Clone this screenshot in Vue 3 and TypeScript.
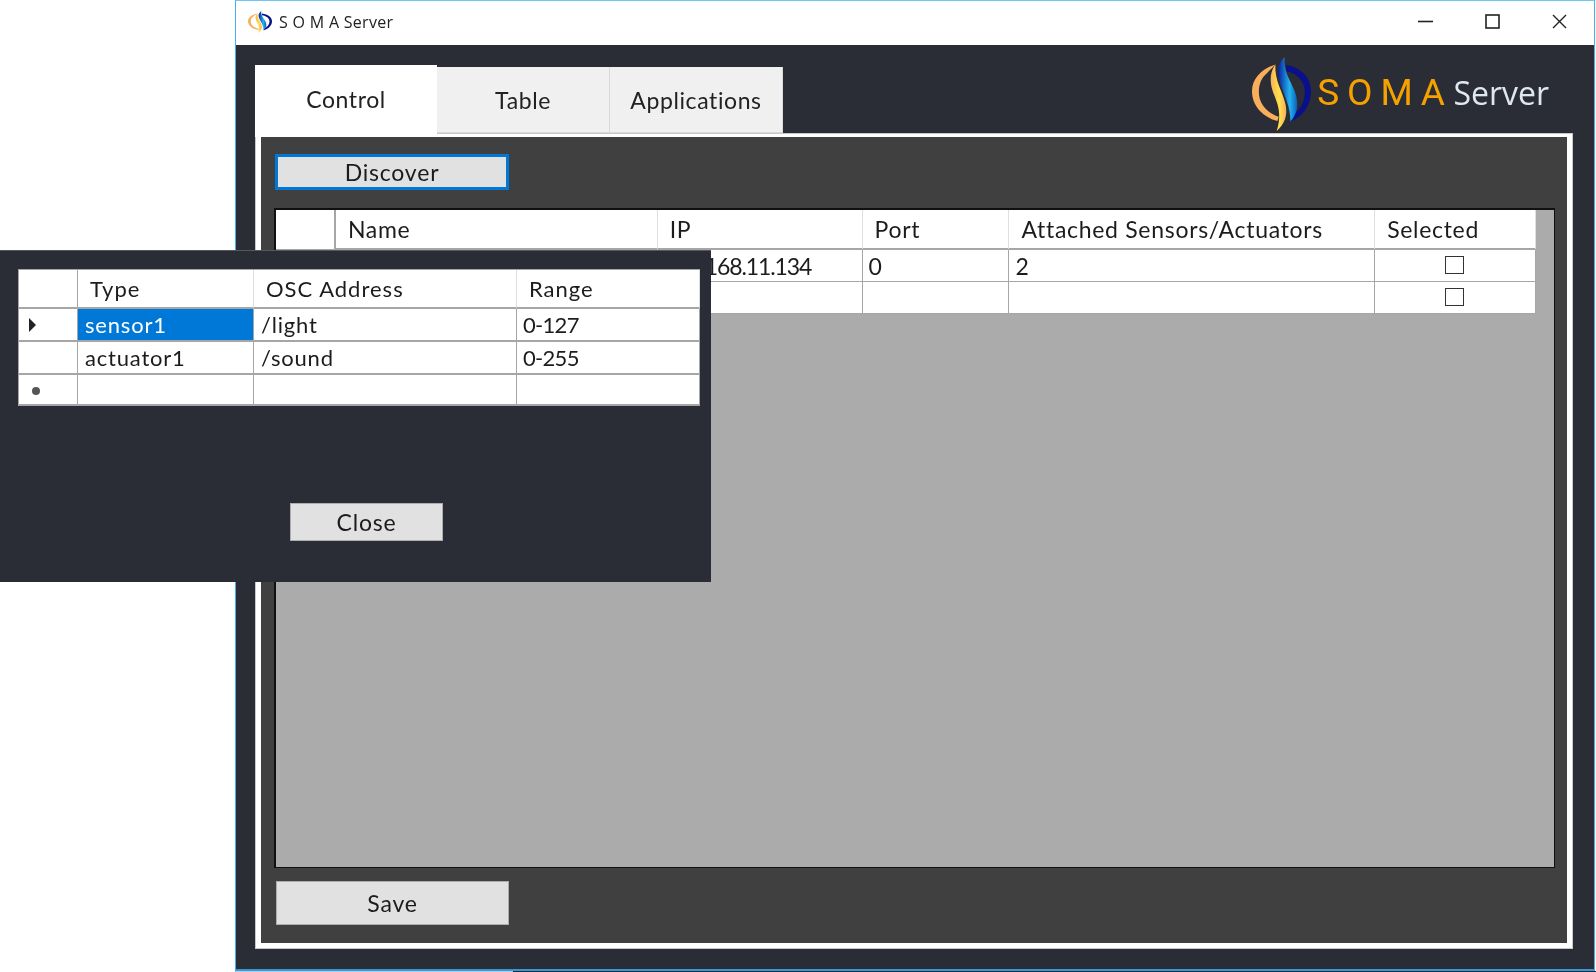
<script setup lang="ts">
const tabs = ['Control', 'Table', 'Applications']

const deviceColumns = [
  { label: 'Name', width: 322 },
  { label: 'IP', width: 205 },
  { label: 'Port', width: 147 },
  { label: 'Attached Sensors/Actuators', width: 366 },
  { label: 'Selected', width: 161 }
]
const devices = [
  { name: '', ip: '192.168.11.134', port: '0', attached: '2' },
  { name: '', ip: '', port: '', attached: '' }
]

const sensorRows = [
  { type: 'sensor1', osc: '/light', range: '0-127', marker: 'arrow' },
  { type: 'actuator1', osc: '/sound', range: '0-255', marker: '' },
  { type: '', osc: '', range: '', marker: 'star' }
]
</script>

<template>
  <div class="desktop">
    <svg class="defs" width="0" height="0">
      <defs>
        <linearGradient id="flame-warm" x1="0" y1="0" x2="1" y2="0">
          <stop offset="0" stop-color="#f9b05c" />
          <stop offset="0.55" stop-color="#ffe14a" />
          <stop offset="1" stop-color="#f9ae5c" />
        </linearGradient>
        <linearGradient id="flame-cool" x1="0" y1="0" x2="1" y2="0">
          <stop offset="0" stop-color="#0a1f9c" />
          <stop offset="0.6" stop-color="#22b4ee" />
          <stop offset="1" stop-color="#0a5fc0" />
        </linearGradient>
        <symbol id="soma-mark" viewBox="38 18 172 220" preserveAspectRatio="none">
          <path fill="#f9ae5c" d="M106 40C62 55 38 85 38 120C38 165 72 198 112 208L116 196C82 184 58 158 58 122C58 96 68 78 80 68Z" />
          <path fill="url(#flame-warm)" d="M106 40C92 60 88 86 98 118C110 152 128 182 110 238C134 216 142 192 136 160C128 120 104 92 106 40Z" />
          <path fill="#0a0f8c" d="M138 42C182 50 210 80 210 120C210 162 186 196 150 210L152 194C176 178 192 154 192 122C192 90 170 66 138 60Z" />
          <path fill="url(#flame-cool)" d="M133 18C112 40 110 62 120 96C132 132 150 164 150 210C170 186 174 164 166 130C156 94 130 70 133 18Z" />
        </symbol>
      </defs>
    </svg>

    <div class="window">
      <div class="titlebar">
        <svg class="title-icon"><use href="#soma-mark" /></svg>
        <span class="title-text">S O M A Server</span>
        <div class="controls">
          <svg width="15" height="15" viewBox="0 0 15 15"><path d="M0 7.5H15" stroke="#222" stroke-width="1.6" /></svg>
          <svg width="15" height="15" viewBox="0 0 15 15"><rect x="1" y="1" width="13" height="13" fill="none" stroke="#222" stroke-width="1.6" /></svg>
          <svg width="15" height="15" viewBox="0 0 15 15"><path d="M1 1L14 14M14 1L1 14" stroke="#222" stroke-width="1.4" /></svg>
        </div>
      </div>

      <div class="body">
        <div class="head">
          <div class="tabs">
            <div v-for="(tab, i) in tabs" :key="tab" class="tab" :class="{ active: i === 0 }">{{ tab }}</div>
          </div>
          <div class="brand">
            <svg class="brand-icon"><use href="#soma-mark" /></svg>
            <span class="brand-soma">S O M A</span>
            <span class="brand-server">Server</span>
          </div>
        </div>

        <div class="frame">
          <div class="panel">
            <button class="btn discover">Discover</button>

            <div class="grid-view">
              <div class="row header">
                <div class="cell corner"></div>
                <div
                  v-for="col in deviceColumns"
                  :key="col.label"
                  class="cell head-cell"
                  :style="{ width: col.width + 'px' }"
                >{{ col.label }}</div>
              </div>
              <div v-for="(d, i) in devices" :key="i" class="row">
                <div class="cell corner"></div>
                <div class="cell" :style="{ width: deviceColumns[0].width + 'px' }">{{ d.name }}</div>
                <div class="cell digits" :style="{ width: deviceColumns[1].width + 'px' }">{{ d.ip }}</div>
                <div class="cell digits" :style="{ width: deviceColumns[2].width + 'px' }">{{ d.port }}</div>
                <div class="cell digits" :style="{ width: deviceColumns[3].width + 'px' }">{{ d.attached }}</div>
                <div class="cell check-cell" :style="{ width: deviceColumns[4].width + 'px' }">
                  <span class="checkbox"></span>
                </div>
              </div>
            </div>

            <button class="btn save">Save</button>
          </div>
        </div>
      </div>
    </div>
    <div class="taskbar-edge"></div>

    <div class="popup">
      <div class="sensor-grid">
        <div class="s-row s-header">
          <div class="s-cell s-mark"></div>
          <div class="s-cell s-type s-head">Type</div>
          <div class="s-cell s-osc s-head">OSC Address</div>
          <div class="s-cell s-range s-head">Range</div>
        </div>
        <div v-for="r in sensorRows" :key="r.marker + r.type" class="s-row">
          <div class="s-cell s-mark">
            <span v-if="r.marker === 'arrow'" class="arrow"></span>
            <span v-else-if="r.marker === 'star'" class="star"></span>
          </div>
          <div class="s-cell s-type" :class="{ selected: r.type === 'sensor1' }">{{ r.type }}</div>
          <div class="s-cell s-osc">{{ r.osc }}</div>
          <div class="s-cell s-range">{{ r.range }}</div>
        </div>
      </div>
      <button class="btn close">Close</button>
    </div>
  </div>
</template>

<style>
html, body {
  margin: 0;
  background: #fff;
}
</style>

<style scoped>
.desktop {
  position: relative;
  width: 1596px;
  height: 972px;
  overflow: hidden;
  background: #fff;
  font-family: Lato, "Liberation Sans", sans-serif;
  font-size: 23px;
  color: #1c1c1c;
  filter: blur(0.4px);
}
.defs {
  position: absolute;
}

.window {
  box-sizing: border-box;
  margin-left: 235px;
  width: 1360px;
  height: 971px;
  border: 1px solid #48b2ea;
  border-top-color: #6cc8f2;
  border-bottom: 2px solid #3a96d4;
  display: flex;
  flex-direction: column;
  background: #2a2d35;
}
.taskbar-edge {
  margin-left: 235px;
  width: 1361px;
  height: 1px;
  background: linear-gradient(90deg, #a8d0ec 0 278px, #1c2a3a 278px);
}
.titlebar {
  height: 44px;
  display: flex;
  align-items: center;
  background: #fff;
  padding-left: 12px;
  flex-shrink: 0;
}
.title-icon {
  width: 24px;
  height: 22px;
  margin-top: -3px;
}
.title-text {
  margin-left: 7px;
  margin-top: -2px;
  font-family: "Open Sans", sans-serif;
  font-size: 16px;
  letter-spacing: 0.3px;
  color: #222;
}
.controls {
  margin-left: auto;
  margin-right: 27px;
  margin-top: -3px;
  display: flex;
  gap: 52px;
}

.body {
  flex: 1;
  display: flex;
  flex-direction: column;
  padding: 20px 21px 20px 19px;
}
.head {
  height: 68px;
  display: flex;
  justify-content: space-between;
  align-items: flex-end;
}
.tabs {
  display: flex;
  align-items: flex-end;
  position: relative;
  z-index: 1;
  letter-spacing: 0.6px;
}
.tab {
  box-sizing: border-box;
  width: 173px;
  height: 66px;
  display: flex;
  align-items: center;
  justify-content: center;
  background: #f0f0f0;
  border-right: 1px solid #d9d9d9;
  border-bottom: 1px solid #d9d9d9;
  color: #222;
  padding-top: 1px;
}
.tab.active {
  width: 182px;
  height: 72px;
  margin-bottom: -4px;
  background: #fff;
  border: 0;
  padding: 0 0 4px;
}
.brand {
  display: flex;
  align-items: center;
  margin-right: 24px;
  align-self: flex-start;
  margin-top: -8px;
}
.brand-icon {
  width: 59px;
  height: 74px;
}
.brand-soma {
  margin-left: 6px;
  margin-bottom: 3px;
  font-family: Roboto, sans-serif;
  font-size: 37px;
  color: #f5a200;
  letter-spacing: -0.6px;
}
.brand-server {
  margin-left: 9px;
  margin-bottom: 3px;
  font-family: "Open Sans", sans-serif;
  font-size: 32px;
  color: #dfe8f0;
}

.frame {
  flex: 1;
  box-sizing: border-box;
  border: 6px solid #fff;
  border-top-width: 4px;
  outline: 1px solid #c8c8c8;
  outline-offset: -1px;
  display: flex;
  min-height: 0;
}
.panel {
  flex: 1;
  display: flex;
  flex-direction: column;
  align-items: flex-start;
  background: #404040;
  padding: 17px 12px 18px 13px;
  min-height: 0;
}

.btn {
  box-sizing: border-box;
  display: block;
  background: #e1e1e1;
  border: 1px solid #adadad;
  font-family: inherit;
  font-size: 23px;
  letter-spacing: 0.8px;
  color: #1c1c1c;
  padding: 0;
}
.discover {
  width: 234px;
  height: 36px;
  margin-left: 1px;
  border: 3px solid #0078d7;
}
.save {
  width: 233px;
  height: 44px;
  margin-top: 13px;
  margin-left: 2px;
}

.grid-view {
  box-sizing: border-box;
  flex: 1;
  align-self: stretch;
  margin-top: 18px;
  background: #ababab;
  border: 2px solid #101010;
  border-right-width: 1px;
  border-bottom-width: 1px;
  min-height: 0;
}
.row {
  display: flex;
  width: 1260px;
  height: 32px;
}
.row.header {
  height: 40px;
}
.cell {
  box-sizing: border-box;
  height: 100%;
  background: #fff;
  border-right: 1px solid #a6a6a6;
  border-bottom: 1px solid #a6a6a6;
  padding-left: 7px;
  display: flex;
  align-items: center;
  white-space: nowrap;
}
.corner {
  width: 60px;
  border-right: 2px solid #a6a6a6;
}
.head-cell {
  padding-left: 12px;
  letter-spacing: 0.7px;
  border-right-color: #e0e0e0;
  border-bottom-width: 2px;
}
.digits {
  letter-spacing: -1.1px;
  padding-left: 6px;
}
.check-cell {
  justify-content: center;
  padding-left: 0;
  padding-right: 1px;
}
.checkbox {
  box-sizing: border-box;
  width: 19px;
  height: 18px;
  background: #fff;
  border: 1.5px solid #333;
  margin-bottom: 2px;
}

.popup {
  position: absolute;
  left: 0;
  top: 250px;
  box-sizing: border-box;
  width: 711px;
  height: 332px;
  background: #2a2d35;
  border-top: 1px solid #55585f;
  padding: 18px 12px 0 18px;
}
.sensor-grid {
  width: 681px;
  background: #fff;
  border-left: 1px solid #a6a6a6;
  border-top: 1px solid #a6a6a6;
}
.s-row {
  display: flex;
  height: 33px;
}
.s-row:last-child {
  height: 31px;
}
.s-header {
  height: 39px;
}
.s-cell {
  box-sizing: border-box;
  height: 100%;
  background: #fff;
  border-right: 1px solid #a6a6a6;
  border-bottom: 2px solid #a6a6a6;
  padding-left: 7px;
  display: flex;
  align-items: center;
  white-space: nowrap;
  font-size: 22px;
  letter-spacing: 0.8px;
}
.s-head {
  padding-left: 12px;
  letter-spacing: 1px;
  border-right-color: #dedede;
}
.s-mark {
  width: 59px;
  padding-left: 0;
}
.s-type {
  width: 176px;
}
.s-osc {
  width: 263px;
}
.s-range {
  width: 183px;
}
.s-range:not(.s-head) {
  padding-left: 6px;
  letter-spacing: -0.7px;
}
.selected {
  background: #0078d7;
  color: #fff;
}
.arrow {
  margin-left: 10px;
  width: 0;
  height: 0;
  border-left: 7px solid #222;
  border-top: 7px solid transparent;
  border-bottom: 7px solid transparent;
}
.star {
  margin-left: 13px;
  width: 8px;
  height: 8px;
  border-radius: 50%;
  background: #555;
  margin-top: 3px;
}
.close {
  width: 153px;
  height: 38px;
  margin-left: 272px;
  margin-top: 97px;
}
</style>
